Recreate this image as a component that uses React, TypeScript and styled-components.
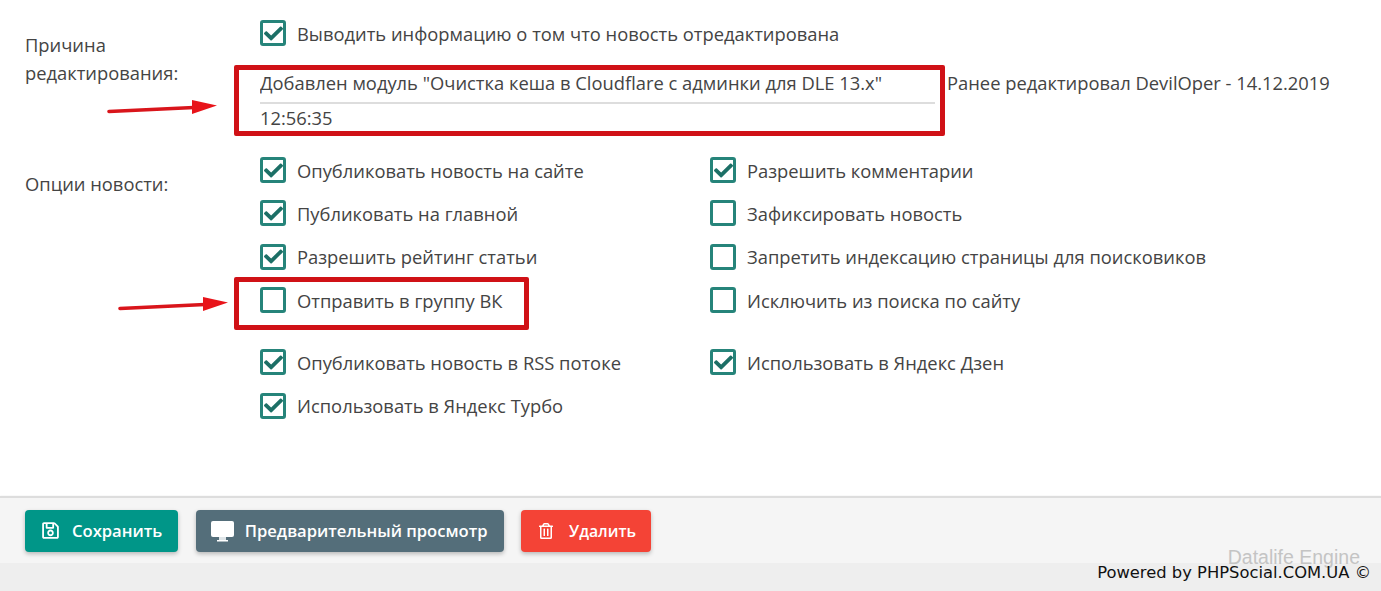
import { createGlobalStyle } from 'styled-components';
import styled from 'styled-components';
import { FaCheck, FaRegSave, FaRegTrashAlt } from 'react-icons/fa';

const GlobalStyle = createGlobalStyle`
  html, body {
    margin: 0;
    padding: 0;
    background: #fff;
  }
  body {
    font-family: 'Open Sans', 'Noto Sans', sans-serif;
    color: #444;
  }
`;

const leftOptions = [
  { label: 'Опубликовать новость на сайте', checked: true },
  { label: 'Публиковать на главной', checked: true },
  { label: 'Разрешить рейтинг статьи', checked: true },
  { label: 'Отправить в группу ВК', checked: false },
];

const rightOptions = [
  { label: 'Разрешить комментарии', checked: true },
  { label: 'Зафиксировать новость', checked: false },
  { label: 'Запретить индексацию страницы для поисковиков', checked: false },
  { label: 'Исключить из поиска по сайту', checked: false },
];

const Option = ({ label, checked }: { label: string; checked: boolean }) => (
  <OptionRow>
    <CheckBox>{checked && <FaCheck />}</CheckBox>
    <span>{label}</span>
  </OptionRow>
);

const Arrow = () => (
  <svg width="114" height="18" viewBox="0 0 114 18">
    <path d="M3 13.5 L88 9.5" stroke="#d9151b" strokeWidth="3.6" strokeLinecap="round" />
    <path d="M86 2 L111 7.5 L86 16 Z" fill="#e8141a" />
  </svg>
);

// монитор с заливкой, в пакете такой только с дыркой
const MonitorIcon = () => (
  <svg width="23" height="22" viewBox="0 0 23 22">
    <rect x="0" y="1" width="23" height="16" rx="2" fill="#fff" />
    <rect x="8" y="17" width="7" height="3" fill="#dfe5e8" />
    <rect x="6" y="20" width="11" height="1.5" fill="#fff" />
  </svg>
);

const App = () => {
  return (
    <Page>
      <GlobalStyle />
      <Form>
        <FormRow>
          <Label />
          <Option label="Выводить информацию о том что новость отредактирована" checked />
        </FormRow>
        <ReasonRow>
          <ReasonLabel>Причина редактирования:</ReasonLabel>
          <div>
            <ReasonLine>
              <ReasonInput readOnly value={'Добавлен модуль "Очистка кеша в Cloudflare с админки для DLE 13.x"'} />
              <span>Ранее редактировал DevilOper - 14.12.2019</span>
            </ReasonLine>
            <ReasonTime>12:56:35</ReasonTime>
          </div>
        </ReasonRow>
        <OptionsRow>
          <OptionsLabel>Опции новости:</OptionsLabel>
          <OptionGrid>
            {leftOptions.map((item, i) => (
              <div key={item.label} style={{ display: 'contents' }}>
                <Option {...item} />
                <Option {...rightOptions[i]} />
              </div>
            ))}
          </OptionGrid>
        </OptionsRow>
        <FormRow>
          <Label />
          <OptionGrid>
            <Option label="Опубликовать новость в RSS потоке" checked />
            <Option label="Использовать в Яндекс Дзен" checked />
            <Option label="Использовать в Яндекс Турбо" checked />
          </OptionGrid>
        </FormRow>
      </Form>
      <Footer>
        <ActionButton $color="#009688">
          <FaRegSave size={19} />
          Сохранить
        </ActionButton>
        <PreviewButton $color="#546e7a">
          <MonitorIcon />
          Предварительный просмотр
        </PreviewButton>
        <DeleteButton $color="#f44336">
          <FaRegTrashAlt size={16} />
          Удалить
        </DeleteButton>
      </Footer>
      <Bottom>
        <Watermark>Datalife Engine</Watermark>
        <Powered>Powered by PHPSocial.COM.UA ©</Powered>
      </Bottom>
      <Highlight $left={234} $top={65} $width={711} $height={71} />
      <Highlight $left={234} $top={277} $width={295} $height={53} />
      <ArrowSpot $left={106} $top={98}>
        <Arrow />
      </ArrowSpot>
      <ArrowSpot $left={117} $top={295}>
        <Arrow />
      </ArrowSpot>
    </Page>
  );
};
export default App;

const Page = styled.div`
  position: relative;
  width: 1381px;
  height: 591px;
  overflow: hidden;
  display: flex;
  flex-direction: column;
`;

const Form = styled.div`
  height: 496px;
  padding-top: 20px;
  box-sizing: border-box;
  font-size: 18.35px;
  color: #444;
`;

const FormRow = styled.div`
  display: grid;
  grid-template-columns: 260px 1fr;
`;

const Label = styled.div`
  padding-left: 25px;
  line-height: 28px;
`;

const ReasonRow = styled(FormRow)`
  margin-top: 17px;
`;

const ReasonLabel = styled(Label)`
  margin-top: -32px;
  width: 190px;
  box-sizing: border-box;
`;

const ReasonLine = styled.div`
  display: flex;
  align-items: flex-start;
  gap: 12px;
  white-space: nowrap;
  line-height: 40px;
`;

const ReasonInput = styled.input`
  width: 675px;
  height: 41px;
  padding: 0;
  border: 0;
  border-bottom: 2px solid #ddd;
  box-sizing: border-box;
  outline: none;
  background: transparent;
  font: inherit;
  color: inherit;
`;

const ReasonTime = styled.div`
  line-height: 28px;
  margin-bottom: 3px;
`;

const OptionsRow = styled(FormRow)`
  margin-top: 22px;
`;

const OptionsLabel = styled(Label)`
  padding-top: 13px;
`;

const OptionGrid = styled.div`
  display: grid;
  grid-template-columns: 450px 1fr;
  row-gap: 17.4px;
  margin-bottom: 36px;
`;

const OptionRow = styled.label`
  display: flex;
  align-items: center;
  gap: 11px;
  height: 26px;
  white-space: nowrap;
`;

const CheckBox = styled.span`
  flex: none;
  width: 26px;
  height: 26px;
  box-sizing: border-box;
  border: 3px solid #26847a;
  border-radius: 3px;
  display: flex;
  align-items: center;
  justify-content: center;
  color: #1c6f66;
  font-size: 19px;
`;

const Footer = styled.div`
  height: 67px;
  box-sizing: border-box;
  display: flex;
  align-items: center;
  gap: 17.5px;
  padding: 0 25px;
  background: #f5f5f5;
  border-top: 2px solid #ddd;
  box-shadow: 0 1px 2px rgba(0, 0, 0, 0.35);
`;

const ActionButton = styled.button<{ $color: string }>`
  display: flex;
  align-items: center;
  gap: 12px;
  height: 42px;
  padding: 0 16px;
  border: 0;
  border-radius: 4px;
  background: ${(p) => p.$color};
  color: #fff;
  font-family: inherit;
  font-size: 16.6px;
  font-weight: 600;
  box-shadow: 0 2px 4px rgba(0, 0, 0, 0.25);
`;

const PreviewButton = styled(ActionButton)`
  gap: 11px;
  padding: 0 16px 0 15px;
`;

const DeleteButton = styled(ActionButton)`
  gap: 15px;
  padding: 0 15px 0 17px;
  font-size: 15.8px;
`;

const Bottom = styled.div`
  flex: 1;
  position: relative;
  background: #eeeeee;
  display: flex;
  justify-content: flex-end;
  padding-right: 10px;
  font-family: 'DejaVu Sans', sans-serif;
  font-size: 16.35px;
  color: #111;
  line-height: 19px;
`;

const Powered = styled.span`
  position: relative;
`;

const Watermark = styled.span`
  position: absolute;
  right: 21px;
  top: -15px;
  font-size: 19.5px;
  font-family: 'Liberation Sans', sans-serif;
  color: #c4c4c4;
`;

const Highlight = styled.div<{ $left: number; $top: number; $width: number; $height: number }>`
  position: absolute;
  left: ${(p) => p.$left}px;
  top: ${(p) => p.$top}px;
  width: ${(p) => p.$width}px;
  height: ${(p) => p.$height}px;
  box-sizing: border-box;
  border: 5px solid #d01116;
  border-radius: 2px;
`;

const ArrowSpot = styled.div<{ $left: number; $top: number }>`
  position: absolute;
  left: ${(p) => p.$left}px;
  top: ${(p) => p.$top}px;
  line-height: 0;
`;
